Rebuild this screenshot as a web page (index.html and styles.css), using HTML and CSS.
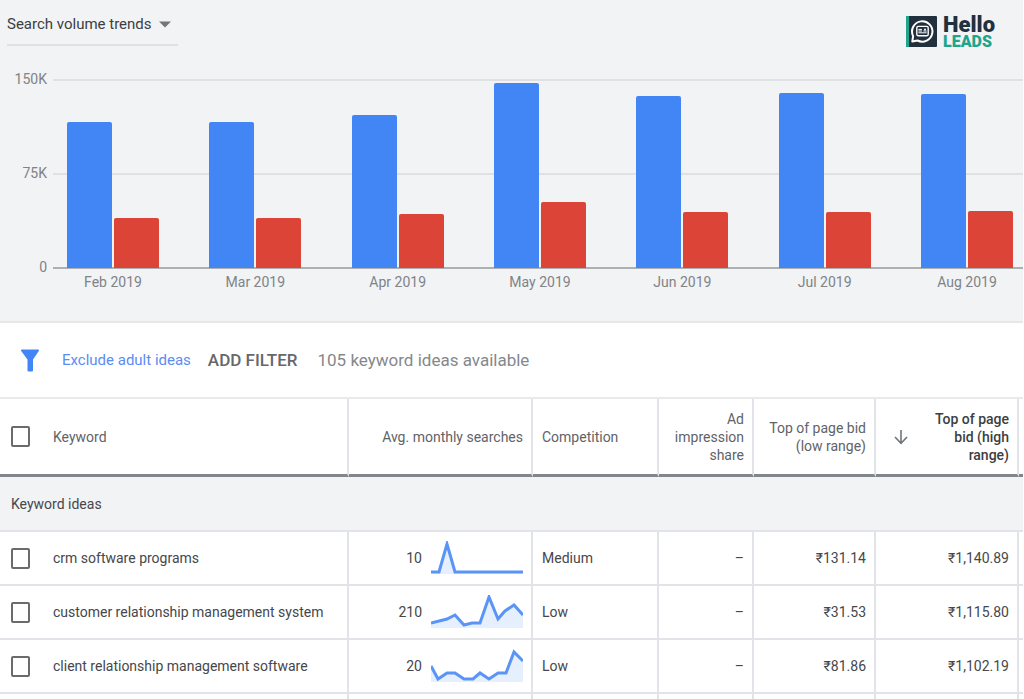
FILE: index.html
```html
<!DOCTYPE html>
<html lang="en">
<head>
<meta charset="utf-8">
<meta name="viewport" content="width=device-width, initial-scale=1">
<title>Keyword ideas</title>
<link rel="stylesheet" href="styles.css">
</head>
<body>
<section class="trends">
  <header class="trends-head">
    <div class="picker">
      <select class="picker-select" aria-label="Chart type"><option>Search volume trends</option></select>
      <svg class="picker-arrow" width="14" height="7" viewBox="0 0 14 7" aria-hidden="true"><path d="M1 0.5h12L7 6.5z" fill="#757575"/></svg>
    </div>
    <a class="logo" href="#">
      <svg width="31" height="31" viewBox="0 0 31 31" aria-hidden="true">
        <rect width="31" height="31" rx="1" fill="#22303e"/>
        <path d="M1 0h2v31H1a1 1 0 0 1-1-1V1a1 1 0 0 1 1-1z" fill="#1ea58c"/>
        <path d="M6.300 25.600l.8-5.600A10.200 10.200 0 1 1 11.500 24.500z" fill="none" stroke="#fff" stroke-width="2" stroke-linejoin="round"/>
        <rect x="10.800" y="10.400" width="11.400" height="9.400" rx="1.600" fill="none" stroke="#fff" stroke-width="1.400"/>
        <path d="M12.400 13.400h3.600M12.400 15h3.600M12.400 16.800h8.200M17.400 15h3.200" stroke="#fff" stroke-width="1"/>
        <circle cx="19" cy="13.400" r="1" fill="#fff"/>
      </svg>
      <span class="logo-text"><span class="logo-top">Hello</span><span class="logo-bottom">LEADS</span></span>
    </a>
  </header>
  <div class="chart">
    <div class="axis"><span>150K</span><span>75K</span><span>0</span></div>
    <div class="lines"><i></i><i></i><i class="base"></i></div>
    <div class="months">
      <div class="month"><div class="bars"><i class="bar blue" style="height:146px"></i><i class="bar red" style="height:50px"></i></div><span>Feb 2019</span></div>
      <div class="month"><div class="bars"><i class="bar blue" style="height:146px"></i><i class="bar red" style="height:50px"></i></div><span>Mar 2019</span></div>
      <div class="month"><div class="bars"><i class="bar blue" style="height:153px"></i><i class="bar red" style="height:54px"></i></div><span>Apr 2019</span></div>
      <div class="month"><div class="bars"><i class="bar blue" style="height:185px"></i><i class="bar red" style="height:66px"></i></div><span>May 2019</span></div>
      <div class="month"><div class="bars"><i class="bar blue" style="height:172px"></i><i class="bar red" style="height:56px"></i></div><span>Jun 2019</span></div>
      <div class="month"><div class="bars"><i class="bar blue" style="height:175px"></i><i class="bar red" style="height:56px"></i></div><span>Jul 2019</span></div>
      <div class="month"><div class="bars"><i class="bar blue" style="height:174px"></i><i class="bar red" style="height:57px"></i></div><span>Aug 2019</span></div>
    </div>
  </div>
</section>

<div class="filters">
  <svg class="funnel" width="20" height="23" viewBox="0 0 20 23" aria-hidden="true"><path d="M2 0.5h16c1 0 1.400.8.8 1.600L13 10.500V21.500q0 1-1 1H8.500q-1 0-1-1V10.500L1.200 2.100C.6 1.300 1 .5 2 .5z" fill="#4285f4"/></svg>
  <a class="exclude" href="#">Exclude adult ideas</a>
  <button class="add" type="button">ADD FILTER</button>
  <span class="count">105 keyword ideas available</span>
</div>

<table class="ideas">
  <colgroup><col><col class="c-search"><col class="c-comp"><col class="c-share"><col class="c-low"><col class="c-high"><col class="c-rest"></colgroup>
  <thead>
    <tr>
      <th><div class="pick"><input type="checkbox" id="all"><label for="all">Keyword</label></div></th>
      <th class="num">Avg. monthly searches</th>
      <th>Competition</th>
      <th class="num">Ad impression share</th>
      <th class="num">Top of page bid (low range)</th>
      <th class="num sorted"><div class="sort"><svg width="14" height="16" viewBox="0 0 14 16" aria-hidden="true"><path d="M7 1v13M1 8l6 6.300L13 8" fill="none" stroke="#70757a" stroke-width="1.600"/></svg><span>Top of page bid (high range)</span></div></th>
      <th></th>
    </tr>
  </thead>
  <tbody>
    <tr class="group"><td colspan="7">Keyword ideas</td></tr>
    <tr>
      <td><div class="pick"><input type="checkbox" id="k1"><label for="k1">crm software programs</label></div></td>
      <td><div class="volume"><span>10</span><svg width="92" height="34" viewBox="0 0 92 34" aria-hidden="true"><path d="M0 31H8L16 3L24 31H92V33H0z" fill="#e6effd"/><path d="M0 31H8L16 3L24 31H92" fill="none" stroke="#5a95f5" stroke-width="3"/></svg></div></td>
      <td>Medium</td><td class="num">–</td><td class="num">₹131.14</td><td class="num">₹1,140.89</td><td></td>
    </tr>
    <tr>
      <td><div class="pick"><input type="checkbox" id="k2"><label for="k2">customer relationship management system</label></div></td>
      <td><div class="volume"><span>210</span><svg width="92" height="34" viewBox="0 0 92 34" aria-hidden="true"><path d="M0 28L16 24L24 20L33 30L41 28H49L58 2L67 24L74 16L83 10L92 20V33H0z" fill="#e6effd"/><path d="M0 28L16 24L24 20L33 30L41 28H49L58 2L67 24L74 16L83 10L92 20" fill="none" stroke="#5a95f5" stroke-width="3"/></svg></div></td>
      <td>Low</td><td class="num">–</td><td class="num">₹31.53</td><td class="num">₹1,115.80</td><td></td>
    </tr>
    <tr>
      <td><div class="pick"><input type="checkbox" id="k3"><label for="k3">client relationship management software</label></div></td>
      <td><div class="volume"><span>20</span><svg width="92" height="34" viewBox="0 0 92 34" aria-hidden="true"><path d="M0 17L7 30L16 24H24L33 30H42L49 24L58 30L67 24H75L83 3L92 12V33H0z" fill="#e6effd"/><path d="M0 17L7 30L16 24H24L33 30H42L49 24L58 30L67 24H75L83 3L92 12" fill="none" stroke="#5a95f5" stroke-width="3"/></svg></div></td>
      <td>Low</td><td class="num">–</td><td class="num">₹81.86</td><td class="num">₹1,102.19</td><td></td>
    </tr>
    <tr class="next"><td></td><td></td><td></td><td></td><td></td><td></td><td></td></tr>
  </tbody>
</table>
</body>
</html>
```
FILE: styles.css
```css
* { box-sizing: border-box; }
body {
  margin: 0 1px 0 0;
  background: #fff;
  color: #45474b;
  font: 14px/18px Roboto, "Liberation Sans", sans-serif;
}

.trends {
  background: #f1f3f5;
  border-bottom: 2px solid #e6e8e8;
  padding-bottom: 30px;
}
.trends-head {
  display: flex;
  justify-content: space-between;
  align-items: flex-start;
  height: 70px;
  padding: 4px 28px 0 7px;
}
.picker {
  display: grid;
  align-items: center;
  width: 171px;
  height: 42px;
  border-bottom: 2px solid #dfe1e3;
}
.picker-select, .picker-arrow { grid-area: 1 / 1; }
.picker-select {
  appearance: none;
  width: 100%;
  height: 40px;
  padding: 0;
  border: 0;
  background: none;
  color: #3c3e42;
  font: inherit;
  font-size: 15px;
}
.picker-arrow {
  justify-self: end;
  margin-right: 6px;
  pointer-events: none;
}
.logo {
  display: flex;
  gap: 6px;
  padding-top: 12px;
  text-decoration: none;
  font-weight: 900;
}
.logo-text { display: grid; align-content: start; }
.logo-top { color: #22303e; font-size: 22px; line-height: 18px; }
.logo-bottom { color: #1ea58c; font-size: 16px; line-height: 15px; }

.chart {
  display: grid;
  grid-template-columns: 47px 6px 1fr;
  color: #808387;
}
.axis, .lines {
  grid-row: 1;
  display: flex;
  flex-direction: column;
  justify-content: space-between;
}
.axis { grid-column: 1; height: 206px; text-align: right; }
.lines { grid-column: 3; height: 199px; padding-top: 9px; }
.lines i { height: 2px; background: #dfe1e3; }
.lines .base { background: #adafb1; }
.months {
  grid-row: 1;
  grid-column: 3;
  display: flex;
  justify-content: space-between;
  padding: 0 10px 0 14px;
}
.month { width: 92px; text-align: center; }
.bars {
  display: flex;
  align-items: flex-end;
  gap: 2px;
  height: 198px;
  margin-bottom: 5px;
}
.bar { flex: 1; border-radius: 2px 2px 0 0; }
.blue { background: #4285f4; }
.red { background: #db4437; }

.filters {
  display: flex;
  align-items: center;
  height: 74px;
  padding-left: 20px;
}
.exclude { margin-left: 22px; color: #5b8cf5; font-size: 15px; text-decoration: none; }
.add {
  margin-left: 17px;
  padding: 0;
  border: 0;
  background: none;
  color: #66686b;
  font: 500 17px/20px Roboto, sans-serif;
}
.count { margin-left: 20px; color: #85888c; font-size: 17px; }

.ideas {
  width: 100%;
  table-layout: fixed;
  border-collapse: separate;
  border-spacing: 0;
  border-top: 2px solid #e8eaed;
}
.c-search { width: 184px; }
.c-comp { width: 126px; }
.c-share { width: 95px; }
.c-low { width: 122px; }
.c-high { width: 143px; }
.c-rest { width: 4px; }
th, td {
  height: 54px;
  padding: 0 8px 0 9px;
  border-right: 2px solid #e1e3e8;
  border-bottom: 2px solid #e1e3e8;
  text-align: left;
  vertical-align: middle;
}
th {
  height: 78px;
  border-bottom: 3px solid #80868b;
  color: #5f6368;
  font-weight: 400;
}
th:last-child, td:last-child { padding: 0; border-right: 0; }
.num { text-align: right; }
.sorted { color: #3c3e42; font-weight: 500; }
.sort {
  display: flex;
  align-items: center;
  justify-content: space-between;
  gap: 20px;
  padding-left: 9px;
}
.sort svg { flex: none; }
.group td { height: 55px; padding-left: 11px; background: #f1f3f5; }
.next td { height: 5px; border-bottom: 0; }
.pick { display: flex; align-items: center; gap: 23px; padding-left: 2px; white-space: nowrap; }
.pick input {
  appearance: none;
  flex: none;
  width: 19px;
  height: 21px;
  margin: 0;
  border: 2px solid #6b6b6b;
  border-radius: 2px;
  background: #fff;
}
.volume { display: flex; align-items: center; justify-content: flex-end; gap: 9px; }
.volume svg { display: block; }
```
